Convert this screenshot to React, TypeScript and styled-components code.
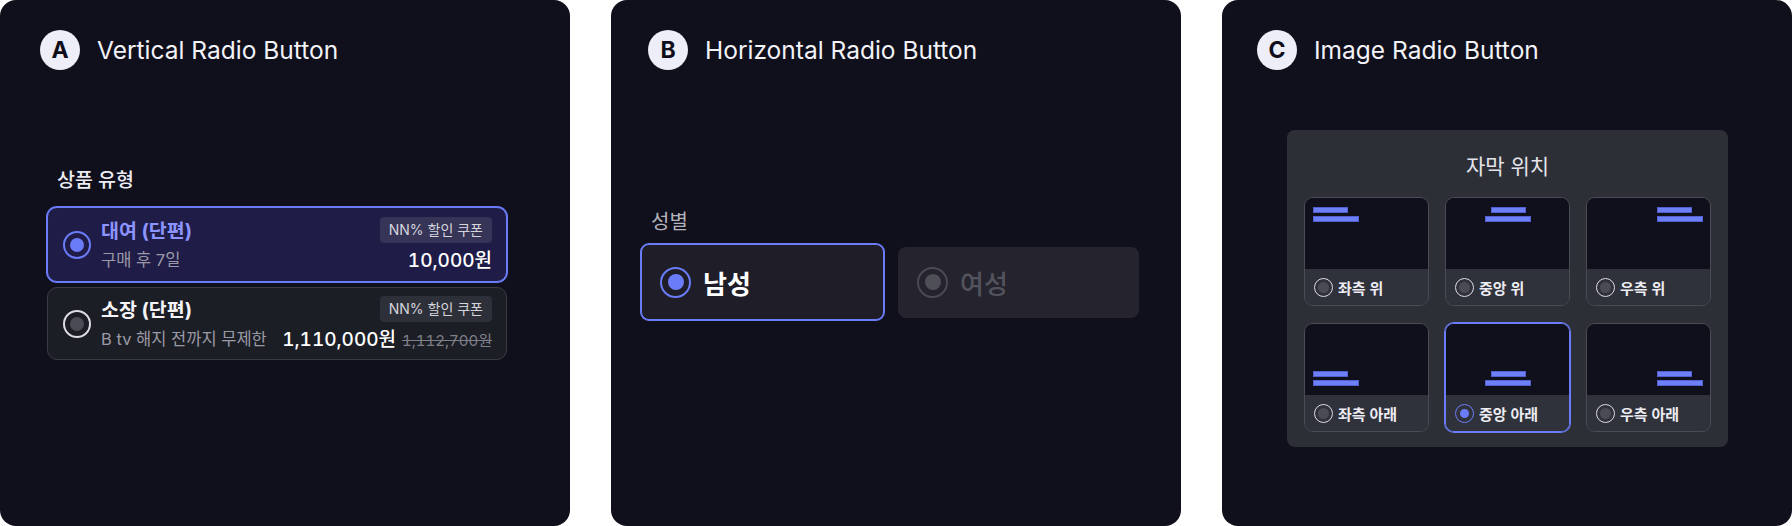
import styled, { createGlobalStyle, css } from 'styled-components';

const GlobalStyle = createGlobalStyle`
  body {
    margin: 0;
    background: #ffffff;
    font-family: Inter, 'Noto Sans CJK KR', sans-serif;
  }
  * {
    box-sizing: border-box;
  }
`;

type RadioState = 'on' | 'off' | 'disabled';

const ringColor: Record<RadioState, string> = {
  on: '#6a7cf8',
  off: '#dcdce2',
  disabled: '#4a4a53',
};

const dotColor: Record<RadioState, string> = {
  on: '#6a7cf8',
  off: '#4a4b54',
  disabled: '#4f4f58',
};

const Page = styled.div`
  display: flex;
  gap: 41px;
  width: 1792px;
  height: 526px;
`;

const Panel = styled.section<{ $inset: number }>`
  flex: none;
  width: 570px;
  height: 526px;
  background: #100f1c;
  border-radius: 16px;
  padding: 30px 0 0 ${({ $inset }) => $inset}px;
  display: flex;
  flex-direction: column;
`;

const Header = styled.header`
  display: flex;
  align-items: center;
  gap: 17px;
  height: 40px;
`;

const Letter = styled.span`
  width: 40px;
  height: 40px;
  border-radius: 50%;
  background: #eeeef8;
  color: #0f0e1a;
  display: grid;
  place-items: center;
  font-size: 23px;
  font-weight: 700;
`;

const Title = styled.h2`
  margin: 0;
  font-size: 24.5px;
  font-weight: 400;
  color: #f2f2f7;
`;

/* ---------- radio ---------- */

const Ring = styled.span<{ $size: number; $width: number; $state: RadioState }>`
  ${({ $size, $width, $state }) => css`
    flex: none;
    width: ${$size}px;
    height: ${$size}px;
    border-radius: 50%;
    border: ${$width}px solid ${ringColor[$state]};
    display: grid;
    place-items: center;
  `}
`;

const Dot = styled.span<{ $size: number; $state: RadioState }>`
  ${({ $size, $state }) => css`
    width: ${$size}px;
    height: ${$size}px;
    border-radius: 50%;
    background: ${dotColor[$state]};
  `}
`;

function Radio({
  state,
  size,
  dot,
  ring = 2,
}: {
  state: RadioState;
  size: number;
  dot: number;
  ring?: number;
}) {
  return (
    <Ring $size={size} $width={ring} $state={state}>
      <Dot $size={dot} $state={state} />
    </Ring>
  );
}

/* ---------- A: vertical ---------- */

const VerticalGroup = styled.div`
  margin: 98px 0 0 7px;
  width: 460px;
  display: flex;
  flex-direction: column;
  gap: 5px;
`;

const GroupLabel = styled.div<{ $muted?: boolean }>`
  margin: 0 0 10px 10px;
  font-size: ${({ $muted }) => ($muted ? 20 : 19.5)}px;
  line-height: 24px;
  font-weight: ${({ $muted }) => ($muted ? 400 : 500)};
  color: ${({ $muted }) => ($muted ? '#b4b4bd' : '#ececf2')};
`;

const Card = styled.div<{ $selected: boolean }>`
  ${({ $selected }) => css`
    height: ${$selected ? 75 : 73}px;
    border-radius: 10px;
    border: 1px solid ${$selected ? '#6a7cf8' : '#3a3c45'};
    box-shadow: ${$selected ? '0 0 0 1px #6a7cf8' : 'none'};
    background: ${$selected ? '#201c48' : '#1c1e25'};
    padding: 0 14px 0 15px;
    display: flex;
    align-items: center;
    gap: 10px;
  `}
`;

const CardBody = styled.div`
  flex: 1;
  display: flex;
  flex-direction: column;
  gap: 2px;
`;

const CardRow = styled.div<{ $tall?: boolean }>`
  height: ${({ $tall }) => ($tall ? 28 : 26)}px;
  display: flex;
  align-items: center;
  justify-content: space-between;
`;

const CardTitle = styled.span<{ $selected: boolean }>`
  font-size: 19.5px;
  font-weight: 700;
  color: ${({ $selected }) => ($selected ? '#8c95ff' : '#f4f4f8')};
`;

const Badge = styled.span<{ $selected: boolean }>`
  height: 26px;
  padding: 0 9px;
  border-radius: 4px;
  background: ${({ $selected }) => ($selected ? '#363457' : '#2e3039')};
  color: #d4d4dc;
  font-size: 14px;
  line-height: 26px;
`;

const CardSub = styled.span`
  font-size: 16.5px;
  color: #9a9aa6;
  white-space: nowrap;
`;

const PriceGroup = styled.span`
  display: flex;
  align-items: baseline;
  gap: 6px;
  font-variant-numeric: tabular-nums;
`;

const Price = styled.span`
  font-size: 19px;
  font-weight: 500;
  color: #ffffff;
`;

const OldPrice = styled.span`
  font-size: 15px;
  color: #7d7e88;
  text-decoration: line-through;
`;

/* ---------- B: horizontal ---------- */

const HorizontalGroup = styled.div`
  margin: 140px 0 0 -7px;
`;

const OptionRow = styled.div`
  display: flex;
  align-items: center;
  gap: 14px;
`;

const Option = styled.div<{ $state: RadioState }>`
  ${({ $state }) => css`
    width: ${$state === 'on' ? 243 : 241}px;
    height: ${$state === 'on' ? 76 : 71}px;
    border-radius: 8px;
    border: 1px solid ${$state === 'on' ? '#6a7cf8' : 'transparent'};
    box-shadow: ${$state === 'on' ? '0 0 0 1px #6a7cf8' : 'none'};
    background: ${$state === 'on' ? '#1e1d28' : '#24232e'};
    padding-left: 18px;
    display: flex;
    align-items: center;
    gap: 12px;
  `}
`;

const OptionText = styled.span<{ $state: RadioState }>`
  font-size: 26px;
  font-weight: ${({ $state }) => ($state === 'on' ? 700 : 500)};
  color: ${({ $state }) => ($state === 'on' ? '#ffffff' : '#53535d')};
`;

/* ---------- C: image ---------- */

const ImageBox = styled.div`
  margin: 60px 0 0 30px;
  width: 441px;
  padding: 22px 17px 15px;
  border-radius: 8px;
  background: #2d2f37;
`;

const BoxTitle = styled.div`
  text-align: center;
  font-size: 21px;
  line-height: 30px;
  color: #e4e4ea;
  margin-bottom: 15px;
`;

const TileGrid = styled.div`
  display: grid;
  grid-template-columns: repeat(3, 125px);
  column-gap: 16px;
  row-gap: 17px;
`;

const Tile = styled.div<{ $selected: boolean }>`
  height: 109px;
  border-radius: 9px;
  border: 1px solid ${({ $selected }) => ($selected ? '#6a7cf8' : '#4a4c55')};
  box-shadow: ${({ $selected }) => ($selected ? '0 0 0 1px #6a7cf8' : 'none')};
  overflow: hidden;
  display: flex;
  flex-direction: column;
`;

type HAlign = 'left' | 'center' | 'right';
type VAlign = 'top' | 'bottom';

const flexPos = { left: 'flex-start', center: 'center', right: 'flex-end', top: 'flex-start', bottom: 'flex-end' };

const Preview = styled.div<{ $h: HAlign; $v: VAlign }>`
  height: 71px;
  flex: none;
  background: #100f1c;
  padding: 9px 7px 9px 8px;
  display: flex;
  justify-content: ${({ $h }) => flexPos[$h]};
  align-items: ${({ $v }) => flexPos[$v]};
`;

const BarGroup = styled.div<{ $h: HAlign }>`
  display: flex;
  flex-direction: column;
  gap: 3px;
  align-items: ${({ $h }) => ($h === 'center' ? 'center' : 'flex-start')};
`;

const Bar = styled.span<{ $w: number }>`
  display: block;
  width: ${({ $w }) => $w}px;
  height: 6px;
  background: #6e7ffa;
  box-shadow: inset 0 0 0 1px rgba(60, 70, 170, 0.55);
`;

const TileLabel = styled.div`
  flex: 1;
  background: #30323b;
  padding-left: 9px;
  display: flex;
  align-items: center;
  gap: 5px;
  font-size: 15px;
  font-weight: 600;
  color: #ececf2;
`;

const tiles: { label: string; h: HAlign; v: VAlign; selected: boolean }[] = [
  { label: '좌측 위', h: 'left', v: 'top', selected: false },
  { label: '중앙 위', h: 'center', v: 'top', selected: false },
  { label: '우측 위', h: 'right', v: 'top', selected: false },
  { label: '좌측 아래', h: 'left', v: 'bottom', selected: false },
  { label: '중앙 아래', h: 'center', v: 'bottom', selected: true },
  { label: '우측 아래', h: 'right', v: 'bottom', selected: false },
];

function App() {
  return (
    <>
      <GlobalStyle />
      <Page>
        <Panel $inset={40}>
          <Header>
            <Letter>A</Letter>
            <Title>Vertical Radio Button</Title>
          </Header>
          <VerticalGroup>
            <GroupLabel>상품 유형</GroupLabel>
            <Card $selected>
              <Radio state="on" size={28} dot={14} />
              <CardBody>
                <CardRow>
                  <CardTitle $selected>대여 (단편)</CardTitle>
                  <Badge $selected>NN% 할인 쿠폰</Badge>
                </CardRow>
                <CardRow $tall>
                  <CardSub>구매 후 7일</CardSub>
                  <PriceGroup>
                    <Price>10,000원</Price>
                  </PriceGroup>
                </CardRow>
              </CardBody>
            </Card>
            <Card $selected={false}>
              <Radio state="off" size={28} dot={14} />
              <CardBody>
                <CardRow>
                  <CardTitle $selected={false}>소장 (단편)</CardTitle>
                  <Badge $selected={false}>NN% 할인 쿠폰</Badge>
                </CardRow>
                <CardRow $tall>
                  <CardSub>B tv 해지 전까지 무제한</CardSub>
                  <PriceGroup>
                    <Price>1,110,000원</Price>
                    <OldPrice>1,112,700원</OldPrice>
                  </PriceGroup>
                </CardRow>
              </CardBody>
            </Card>
          </VerticalGroup>
        </Panel>

        <Panel $inset={37}>
          <Header>
            <Letter>B</Letter>
            <Title>Horizontal Radio Button</Title>
          </Header>
          <HorizontalGroup>
            <GroupLabel $muted>성별</GroupLabel>
            <OptionRow>
              <Option $state="on">
                <Radio state="on" size={31} dot={16} />
                <OptionText $state="on">남성</OptionText>
              </Option>
              <Option $state="disabled">
                <Radio state="disabled" size={31} dot={16} />
                <OptionText $state="disabled">여성</OptionText>
              </Option>
            </OptionRow>
          </HorizontalGroup>
        </Panel>

        <Panel $inset={35}>
          <Header>
            <Letter>C</Letter>
            <Title>Image Radio Button</Title>
          </Header>
          <ImageBox>
            <BoxTitle>자막 위치</BoxTitle>
            <TileGrid>
              {tiles.map((t) => (
                <Tile key={t.label} $selected={t.selected}>
                  <Preview $h={t.h} $v={t.v}>
                    <BarGroup $h={t.h}>
                      <Bar $w={35} />
                      <Bar $w={46} />
                    </BarGroup>
                  </Preview>
                  <TileLabel>
                    <Radio state={t.selected ? 'on' : 'off'} size={19} dot={t.selected ? 9 : 11} ring={1.5} />
                    {t.label}
                  </TileLabel>
                </Tile>
              ))}
            </TileGrid>
          </ImageBox>
        </Panel>
      </Page>
    </>
  );
}

export default App;
